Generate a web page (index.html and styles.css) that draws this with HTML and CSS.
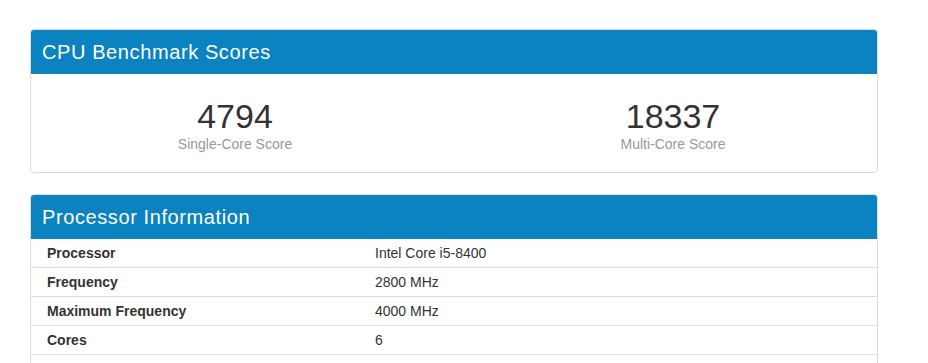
FILE: index.html
```html
<!DOCTYPE html>
<html lang="en">
<head>
<meta charset="utf-8">
<title>CPU Benchmark</title>
<link rel="stylesheet" href="styles.css">
</head>
<body>
<div class="page">
  <section class="card">
    <h2 class="card-head">CPU Benchmark Scores</h2>
    <div class="scores">
      <div class="score">
        <div class="score-value">4794</div>
        <div class="score-label">Single-Core Score</div>
      </div>
      <div class="score">
        <div class="score-value">18337</div>
        <div class="score-label">Multi-Core Score</div>
      </div>
    </div>
  </section>
  <section class="card">
    <h2 class="card-head">Processor Information</h2>
    <div class="info">
      <div class="row"><div class="name">Processor</div><div class="value">Intel Core i5-8400</div></div>
      <div class="row"><div class="name">Frequency</div><div class="value">2800 MHz</div></div>
      <div class="row"><div class="name">Maximum Frequency</div><div class="value">4000 MHz</div></div>
      <div class="row"><div class="name">Cores</div><div class="value">6</div></div>
      <div class="row row-empty"></div>
    </div>
  </section>
</div>
</body>
</html>
```
FILE: styles.css
```css
html, body {
  margin: 0;
  padding: 0;
  background: #fff;
}
body {
  font-family: "Liberation Sans", Arial, Helvetica, sans-serif;
  color: #333;
}
.page {
  width: 848px;
  padding: 29px 0 0 30px;
  display: flex;
  flex-direction: column;
  gap: 21px;
}
.card {
  border: 1px solid #dcdcdc;
  border-radius: 4px;
  overflow: hidden;
}
.card-head {
  margin: 0;
  height: 44px;
  line-height: 44px;
  padding: 0 11px;
  background: #0a83c0;
  color: #fff;
  font-size: 20px;
  font-weight: normal;
  letter-spacing: 0.6px;
}
.scores {
  display: grid;
  grid-template-columns: 1fr 1fr;
  margin: 0 -15px;
  padding: 24px 0 18px;
}
.score {
  text-align: center;
}
.score-value {
  font-size: 34px;
  line-height: 36px;
  color: #333;
}
.score-label {
  font-size: 14px;
  line-height: 20px;
  color: #999;
}
.info {
  display: flex;
  flex-direction: column;
}
.row {
  display: grid;
  grid-template-columns: 328px 1fr;
  font-size: 14px;
  line-height: 20px;
  padding: 4px 0;
}
.row + .row {
  border-top: 1px solid #ddd;
}
.row-empty {
  height: 20px;
}
.name {
  font-weight: bold;
  padding-left: 16px;
}
.value {
  padding-left: 16px;
}
```
